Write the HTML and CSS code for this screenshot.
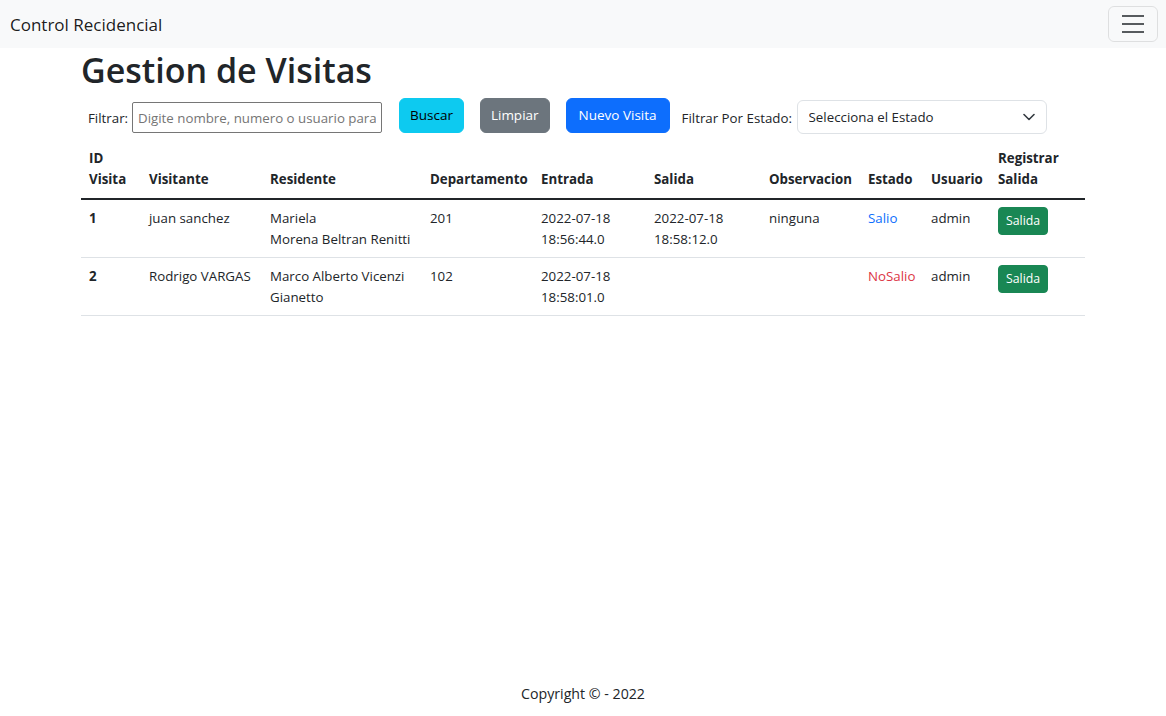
FILE: index.html
```html
<!DOCTYPE html>
<html lang="es">
<head>
<meta charset="utf-8">
<title>Control Recidencial</title>
<link rel="stylesheet" href="styles.css">
</head>
<body>
<nav class="navbar">
  <a class="brand" href="#">Control Recidencial</a>
  <button class="toggler" type="button" aria-label="Toggle navigation">
    <svg width="22" height="18" viewBox="0 0 22 18"><path d="M0 1H22M0 9H22M0 17H22" stroke="rgba(33,37,41,0.75)" stroke-width="2"/></svg>
  </button>
</nav>
<main class="main">
  <h1 class="title">Gestion de Visitas</h1>
  <form class="filters">
    <label class="lbl lbl-filter" for="q">Filtrar:</label>
    <input class="search" id="q" type="text" placeholder="Digite nombre, numero o usuario para buscar">
    <button type="button" class="btn btn-info">Buscar</button>
    <button type="button" class="btn btn-secondary">Limpiar</button>
    <button type="button" class="btn btn-primary">Nuevo Visita</button>
    <label class="lbl lbl-estado" for="estado">Filtrar Por Estado:</label>
    <span class="select-wrap">
      <select class="form-select" id="estado">
        <option>Selecciona el Estado</option>
        <option>Salio</option>
        <option>NoSalio</option>
      </select>
      <svg class="chev" width="12" height="8" viewBox="0 0 12 8"><path d="M1 1.5l5 5 5-5" fill="none" stroke="#343a40" stroke-width="1.6" stroke-linecap="round" stroke-linejoin="round"/></svg>
    </span>
  </form>
  <table class="table">
    <colgroup>
      <col class="c-id"><col class="c-vis"><col class="c-res"><col class="c-dep"><col class="c-ent">
      <col class="c-sal"><col class="c-obs"><col class="c-est"><col class="c-usr"><col class="c-reg">
    </colgroup>
    <thead>
      <tr>
        <th>ID Visita</th><th>Visitante</th><th>Residente</th><th>Departamento</th><th>Entrada</th>
        <th>Salida</th><th>Observacion</th><th>Estado</th><th>Usuario</th><th>Registrar Salida</th>
      </tr>
    </thead>
    <tbody>
      <tr>
        <th class="rowid">1</th><td>juan sanchez</td><td>Mariela<br>Morena Beltran Renitti</td><td>201</td>
        <td>2022-07-18 18:56:44.0</td><td>2022-07-18 18:58:12.0</td><td>ninguna</td>
        <td class="text-primary">Salio</td><td>admin</td><td><button type="button" class="btn-sm">Salida</button></td>
      </tr>
      <tr>
        <th class="rowid">2</th><td>Rodrigo VARGAS</td><td>Marco Alberto Vicenzi<br>Gianetto</td><td>102</td>
        <td>2022-07-18 18:58:01.0</td><td></td><td></td>
        <td class="text-danger">NoSalio</td><td>admin</td><td><button type="button" class="btn-sm">Salida</button></td>
      </tr>
    </tbody>
  </table>
</main>
<footer class="footer">Copyright © - 2022</footer>
</body>
</html>
```

FILE: styles.css
```css
* { box-sizing: border-box; }

body {
  margin: 0;
  min-height: 100vh;
  display: flex;
  flex-direction: column;
  font-family: "Open Sans", "Segoe UI", sans-serif;
  font-size: 13.3px;
  line-height: 21px;
  color: #212529;
  background: #fff;
}

.navbar {
  height: 48px;
  background: #f8f9fa;
  display: flex;
  align-items: center;
  justify-content: space-between;
  padding: 0 8px 0 10px;
}

.brand {
  font-size: 17px;
  line-height: 1;
  color: rgba(0, 0, 0, 0.9);
  text-decoration: none;
}

.toggler {
  width: 50px;
  height: 36px;
  padding: 0;
  border: 1px solid rgba(0, 0, 0, 0.1);
  border-radius: 6px;
  background: transparent;
  display: flex;
  align-items: center;
  justify-content: center;
}

.main {
  width: 1004px;
  margin: 0 auto;
}

.title {
  margin: 0;
  padding-top: 1px;
  font-size: 34px;
  line-height: 42px;
  font-weight: 600;
}

.filters {
  display: flex;
  align-items: flex-start;
  margin-top: 7px;
  padding-left: 7px;
}

.lbl {
  margin-top: 10px;
  white-space: nowrap;
}

.lbl-filter { width: 44px; }

.lbl-estado {
  width: 115px;
  margin-left: 12px;
}

.search {
  margin-top: 4px;
  width: 250px;
  height: 31px;
  padding: 1px 5px;
  border: 1px solid #767676;
  border-radius: 2px;
  font: inherit;
  color: #212529;
}

.search::placeholder { color: #757575; }

.btn {
  height: 35px;
  padding: 0 12px;
  margin-left: 16px;
  border: 1px solid transparent;
  border-radius: 6px;
  font: inherit;
  font-size: 13.5px;
  line-height: 33px;
  cursor: pointer;
}

.btn-info {
  margin-left: 17px;
  padding: 0 10px;
  background: #0dcaf0;
  border-color: #0dcaf0;
  color: #000;
}

.btn-secondary {
  padding: 0 10px;
  background: #6c757d;
  border-color: #6c757d;
  color: #fff;
}

.btn-primary {
  background: #0d6efd;
  border-color: #0d6efd;
  color: #fff;
}

.select-wrap {
  position: relative;
  margin-top: 2px;
  display: block;
}

.form-select {
  width: 250px;
  height: 34px;
  padding: 0 36px 0 11px;
  border: 1px solid #dee2e6;
  border-radius: 6px;
  background: #fff;
  font: inherit;
  color: #212529;
  appearance: none;
  -webkit-appearance: none;
}

.chev {
  position: absolute;
  right: 12px;
  top: 13px;
  pointer-events: none;
}

.table {
  width: 1004px;
  margin-top: 6px;
  border-collapse: collapse;
  table-layout: fixed;
}

.c-id { width: 60px; }
.c-vis { width: 121px; }
.c-res { width: 160px; }
.c-dep { width: 111px; }
.c-ent { width: 113px; }
.c-sal { width: 115px; }
.c-obs { width: 99px; }
.c-est { width: 63px; }
.c-usr { width: 67px; }
.c-reg { width: 95px; }

.table thead th {
  padding: 8px;
  text-align: left;
  vertical-align: bottom;
  font-weight: 700;
  border-bottom: 2px solid #212529;
}

.table tbody th,
.table tbody td {
  padding: 8px 8px 7px;
  text-align: left;
  vertical-align: top;
  border-bottom: 1px solid #dee2e6;
}

.rowid { font-weight: 700; }

.text-primary { color: #0d6efd; }
.text-danger { color: #dc3545; }

.btn-sm {
  height: 28px;
  margin-top: -1px;
  padding: 0 7px;
  border: 1px solid #198754;
  border-radius: 4px;
  background: #198754;
  color: #fff;
  font: inherit;
  font-size: 12.3px;
  line-height: 26px;
  cursor: pointer;
}

.footer {
  margin-top: auto;
  padding-bottom: 12px;
  font-size: 14.2px;
  text-align: center;
}
```
